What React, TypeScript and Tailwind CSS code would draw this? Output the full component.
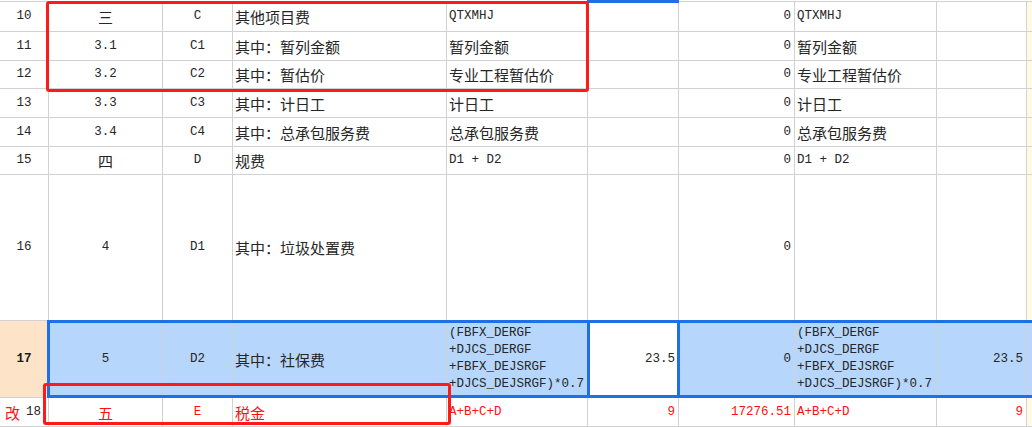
import React from "react";

type Row = {
  n: string;
  a: string;
  b: string;
  c: string;
  d: string;
  e: string;
  f: string;
  g: string;
  h: string;
  kind?: "sel" | "red";
};

const FORMULA = "(FBFX_DERGF\n+DJCS_DERGF\n+FBFX_DEJSRGF\n+DJCS_DEJSRGF)*0.7";

const rows: Row[] = [
  { n: "10", a: "三", b: "C", c: "其他项目费", d: "QTXMHJ", e: "", f: "0", g: "QTXMHJ", h: "" },
  { n: "11", a: "3.1", b: "C1", c: "其中：暂列金额", d: "暂列金额", e: "", f: "0", g: "暂列金额", h: "" },
  { n: "12", a: "3.2", b: "C2", c: "其中：暂估价", d: "专业工程暂估价", e: "", f: "0", g: "专业工程暂估价", h: "" },
  { n: "13", a: "3.3", b: "C3", c: "其中：计日工", d: "计日工", e: "", f: "0", g: "计日工", h: "" },
  { n: "14", a: "3.4", b: "C4", c: "其中：总承包服务费", d: "总承包服务费", e: "", f: "0", g: "总承包服务费", h: "" },
  { n: "15", a: "四", b: "D", c: "规费", d: "D1 + D2", e: "", f: "0", g: "D1 + D2", h: "" },
  { n: "16", a: "4", b: "D1", c: "其中：垃圾处置费", d: "", e: "", f: "0", g: "", h: "" },
  { n: "17", a: "5", b: "D2", c: "其中：社保费", d: FORMULA, e: "23.5", f: "0", g: FORMULA, h: "23.5", kind: "sel" },
  { n: "18", a: "五", b: "E", c: "税金", d: "A+B+C+D", e: "9", f: "17276.51", g: "A+B+C+D", h: "9", kind: "red" },
];

const isCJK = (s: string) => /[\u3000-\u9fff\uff00-\uffef]/.test(s);

const CJK = "font-['Noto_Sans_CJK_SC','Noto_Sans_CJK_JP',sans-serif] text-[15px] leading-[17px]";
const MONO = "font-['Liberation_Mono','DejaVu_Sans_Mono',monospace] text-[12.5px] leading-[17px]";

function Text({ s, className = "" }: { s: string; className?: string }) {
  if (!s) return null;
  return (
    <span className={`${isCJK(s) ? CJK : MONO} whitespace-pre ${className}`}>{s}</span>
  );
}

function Cell({
  s,
  align,
  bg,
  color,
}: {
  s: string;
  align: "center" | "left" | "right";
  bg: string;
  color: string;
}) {
  const alignCls =
    align === "center"
      ? "justify-center text-center"
      : align === "left"
      ? "justify-start pl-[2px] text-left"
      : "justify-end pr-[3px] text-right";
  return (
    <div className={`flex items-center overflow-hidden ${alignCls} ${bg} ${color}`}>
      <Text s={s} />
    </div>
  );
}

export default function App() {
  return (
    <div className="relative w-[1032px] h-[427px] overflow-hidden bg-white">
      <div className="h-px bg-white" />
      <div className="grid grid-cols-[48px_113px_69px_213px_140px_90px_115px_141px_89px_1fr] grid-rows-[29px_28px_27px_28px_28px_27px_145px_76px_28px] gap-px bg-[#d2d2d2] pt-px pb-px">
        {rows.map((r) => {
          const sel = r.kind === "sel";
          const red = r.kind === "red";
          const bg = sel ? "bg-[#b6d6fb]" : "bg-white";
          const color = red ? "text-[#ff1010]" : "text-[#262626]";
          return (
            <React.Fragment key={r.n}>
              {sel ? (
                <div className="flex items-center justify-center bg-[#fde4c8] text-[#1a1a1a]">
                  <span className={`${MONO} font-bold`}>{r.n}</span>
                </div>
              ) : red ? (
                <div className="flex items-center justify-start gap-[6px] pl-[5px] bg-white overflow-hidden">
                  <span className={`${CJK} text-[#ff1010]`}>改</span>
                  <span className={`${MONO} text-[#262626]`}>{r.n}</span>
                </div>
              ) : (
                <div className="flex items-center justify-center bg-white text-[#262626]">
                  <span className={MONO}>{r.n}</span>
                </div>
              )}
              <Cell s={r.a} align="center" bg={bg} color={color} />
              <Cell s={r.b} align="center" bg={bg} color={color} />
              <Cell s={r.c} align="left" bg={bg} color={color} />
              <Cell s={r.d} align="left" bg={bg} color={color} />
              <Cell s={r.e} align="right" bg={sel ? "bg-white" : bg} color={color} />
              <Cell s={r.f} align="right" bg={bg} color={color} />
              <Cell s={r.g} align="left" bg={bg} color={color} />
              <Cell s={r.h} align="right" bg={bg} color={color} />
              <div className={sel ? "bg-[#b6d6fb]" : "bg-[#fffbe3]"} />
            </React.Fragment>
          );
        })}
      </div>

      {/* blue top edge above column E */}
      <div className="absolute left-[587px] top-0 w-[92px] h-[3px] bg-[#1f6fe5]" />

      {/* selected row outline */}
      <div className="absolute left-[47px] top-[320px] w-[1000px] h-[78px] border-[3px] border-[#1f6fe5]" />
      {/* active cell outline */}
      <div className="absolute left-[587px] top-[320px] w-[93px] h-[78px] border-[3px] border-[#1f6fe5]" />

      {/* red annotation boxes */}
      <div className="absolute left-[46px] top-[1px] w-[543px] h-[91px] border-[3px] border-[#ff1a1a] rounded-[3px]" />
      <div className="absolute left-[43px] top-[383px] w-[408px] h-[42px] border-[3px] border-[#ff1a1a] rounded-[3px]" />
    </div>
  );
}
